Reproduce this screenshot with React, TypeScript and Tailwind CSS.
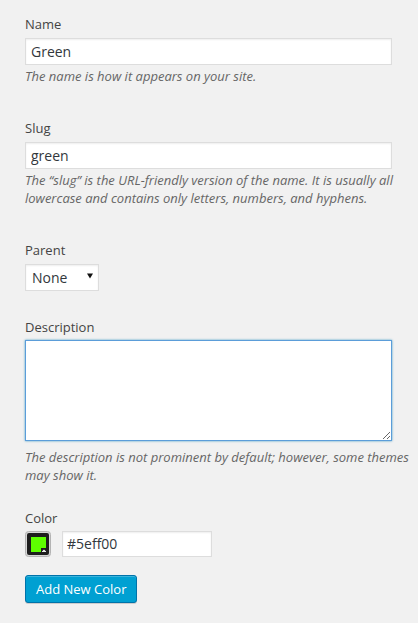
import React from "react";

const boxCls =
  "block bg-white border border-[#dddddd] shadow-[inset_0_1px_2px_rgba(0,0,0,0.07)] text-[14px] text-[#32373c] outline-none";

const Label = ({ children }: { children: React.ReactNode }) => (
  <label className="block text-[13px] leading-[19px] text-[#444444]">{children}</label>
);

// descriptions run past the right edge of the inputs
const Hint = ({ children, className = "" }: { children: React.ReactNode; className?: string }) => (
  <p className={`-mr-[24px] italic text-[13px] leading-[18.5px] text-[#666666] ${className}`}>{children}</p>
);

// little colour-picker swatch (iris style)
const Swatch = ({ color }: { color: string }) => (
  <svg width="26" height="26" viewBox="0 0 26 26" className="block shrink-0">
    <rect x="0.5" y="0.5" width="25" height="25" rx="3" fill="#d7d7d7" stroke="#b4b4b4" />
    <rect x="2" y="2" width="22" height="22" rx="2" fill="#1e1e1e" />
    <path d="M6 6 H21 V17 H16 V21 H6 Z" fill={color} />
    <path d="M17.5 20 L19 18.5 L20.5 20 Z" fill="#ffffff" />
    <rect x="17" y="20" width="4" height="0.9" fill="#ffffff" />
  </svg>
);

export default function App() {
  return (
    <div className="min-h-screen bg-[#f1f1f1] pl-[25px] pr-[26px] pt-[15px] font-['Open_Sans',sans-serif]">
      <div className="mb-[33px]">
        <Label>Name</Label>
        <input className={`${boxCls} mt-[4px] h-[27px] w-full px-[5px]`} defaultValue="Green" />
        <Hint className="mt-[2px]">The name is how it appears on your site.</Hint>
      </div>

      <div className="mb-[33px]">
        <Label>Slug</Label>
        <input className={`${boxCls} mt-[4px] h-[27px] w-full px-[5px]`} defaultValue="green" />
        <Hint className="mt-[2px]">
          The “slug” is the URL-friendly version of the name. It is usually all lowercase and contains only
          letters, numbers, and hyphens.
        </Hint>
      </div>

      <div className="mb-[27px]">
        <Label>Parent</Label>
        <div className="mt-[4px] flex h-[27px] w-[74px] items-center justify-between border border-[#dddddd] bg-white pl-[6px] pr-[5px] shadow-[inset_0_1px_2px_rgba(0,0,0,0.07)]">
          <span className="text-[14px] text-[#32373c]">None</span>
          <svg width="6" height="6" viewBox="0 0 6 6" className="mb-[3px]">
            <path d="M0 0.5 H6 L3 5.5 Z" fill="#111111" />
          </svg>
        </div>
      </div>

      <div className="mb-[24px]">
        <Label>Description</Label>
        <textarea
          className="mt-[3px] block h-[101px] w-full resize-y border border-[#5b9dd9] bg-white shadow-[0_0_2px_rgba(30,140,190,0.8)] outline-none"
          defaultValue=""
        />
        <Hint className="mt-[7px]">
          The description is not prominent by default; however, some themes may show it.
        </Hint>
      </div>

      <div>
        <Label>Color</Label>
        <div className="mt-[3px] flex h-[26px] items-center gap-[11px]">
          <Swatch color="#5eff00" />
          <input className={`${boxCls} h-[26px] w-[150px] px-[4px]`} defaultValue="#5eff00" />
        </div>
        <button className="mt-[18px] h-[28px] rounded-[3px] border border-[#0073aa] bg-[#00a0d2] px-[10px] text-[13px] leading-[26px] text-white shadow-[inset_0_1px_0_rgba(120,200,230,0.5),0_1px_0_rgba(0,0,0,0.15)]">
          Add New Color
        </button>
      </div>
    </div>
  );
}
